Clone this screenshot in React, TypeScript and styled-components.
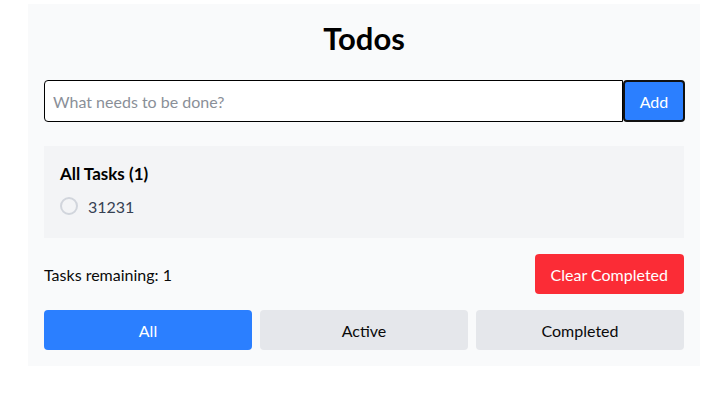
import React, { useState } from "react";
import styled, { createGlobalStyle } from "styled-components";

const Global = createGlobalStyle`
  * { box-sizing: border-box; }
  html, body { margin: 0; padding: 0; background: #ffffff; }
  body { font-family: "Lato", "Noto Sans", "Liberation Sans", sans-serif; color: #000; }
`;

const Page = styled.div`
  padding: 4px 17px 0 28px;
`;

const Card = styled.div`
  width: 672px;
  background: #f9fafb;
  padding: 16px;
`;

const Title = styled.h1`
  margin: 0 0 24px;
  font-size: 31px;
  line-height: 36px;
  font-weight: 700;
  text-align: center;
`;

const Form = styled.form`
  display: flex;
  margin: 0 0 24px;
  height: 42px;
`;

const Input = styled.input`
  flex: 1;
  min-width: 0;
  height: 42px;
  border: 1px solid #000;
  border-radius: 4px 0 0 4px;
  padding: 0 8px;
  font: inherit;
  font-size: 16px;
  background: #fff;
  outline: none;
  &::placeholder { color: #8a8f98; }
`;

const AddButton = styled.button`
  width: 62px;
  height: 42px;
  margin-right: -1px;
  background: #2b7fff;
  color: #fff;
  border: 2px solid #111;
  border-radius: 4px;
  font: inherit;
  font-size: 16px;
  cursor: pointer;
`;

const Panel = styled.div`
  background: #f3f4f6;
  padding: 16px 16px 20px;
  margin-bottom: 16px;
`;

const PanelTitle = styled.h2`
  margin: 0 0 8px;
  font-size: 17px;
  line-height: 24px;
  font-weight: 700;
`;

const List = styled.ul`
  list-style: none;
  margin: 0;
  padding: 0;
`;

const Item = styled.li`
  display: flex;
  align-items: center;
  gap: 10px;
  height: 24px;
  color: #364153;
  font-size: 16px;
`;

const Circle = styled.span`
  width: 18px;
  height: 18px;
  border-radius: 50%;
  border: 2px solid #d1d5dc;
`;

const Footer = styled.div`
  display: flex;
  justify-content: space-between;
  align-items: center;
  margin-bottom: 16px;
`;

const Remaining = styled.span`
  font-size: 16px;
  color: #0a0a0a;
`;

const ClearButton = styled.button`
  height: 40px;
  padding: 0 16px;
  background: #fb2c36;
  color: #fff;
  border: none;
  border-radius: 4px;
  font: inherit;
  font-size: 16px;
  cursor: pointer;
`;

const Filters = styled.div`
  display: grid;
  grid-template-columns: repeat(3, 1fr);
  gap: 8px;
`;

const FilterButton = styled.button<{ $active?: boolean }>`
  height: 40px;
  border: none;
  border-radius: 4px;
  background: ${(p) => (p.$active ? "#2b7fff" : "#e5e7eb")};
  color: ${(p) => (p.$active ? "#fff" : "#0a0a0a")};
  font: inherit;
  font-size: 16px;
  cursor: pointer;
`;

export default function App() {
  const [filter, setFilter] = useState("All");
  return (
    <>
      <Global />
      <Page>
        <Card>
          <Title>Todos</Title>
          <Form onSubmit={(e) => e.preventDefault()}>
            <Input placeholder="What needs to be done?" />
            <AddButton type="submit">Add</AddButton>
          </Form>
          <Panel>
            <PanelTitle>All Tasks (1)</PanelTitle>
            <List>
              <Item>
                <Circle />
                31231
              </Item>
            </List>
          </Panel>
          <Footer>
            <Remaining>Tasks remaining: 1</Remaining>
            <ClearButton>Clear Completed</ClearButton>
          </Footer>
          <Filters>
            {["All", "Active", "Completed"].map((f) => (
              <FilterButton key={f} $active={filter === f} onClick={() => setFilter(f)}>
                {f}
              </FilterButton>
            ))}
          </Filters>
        </Card>
      </Page>
    </>
  );
}
